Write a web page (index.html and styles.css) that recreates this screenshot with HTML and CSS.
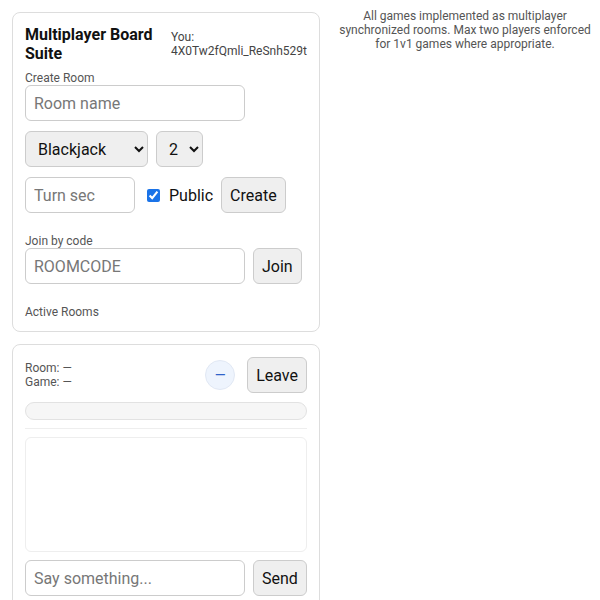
FILE: index.html
```html
<!DOCTYPE html>
<html>
<head>
<meta charset="utf-8">
<link rel="stylesheet" href="styles.css">
</head>
<body>
<div class="layout">
  <div class="side">
    <section class="card lobby">
      <div class="head">
        <h1 class="title">Multiplayer Board Suite</h1>
        <div class="you">You:<br>4X0Tw2fQmli_ReSnh529t</div>
      </div>
      <div class="lbl first">Create Room</div>
      <input class="field wide" type="text" placeholder="Room name">
      <div class="row">
        <select class="sel game"><option>Blackjack</option></select>
        <select class="sel count"><option>2</option></select>
      </div>
      <div class="row">
        <input class="field turn" type="text" placeholder="Turn sec">
        <label class="check"><input type="checkbox" checked> Public</label>
        <button class="btn">Create</button>
      </div>
      <div class="lbl gap">Join by code</div>
      <div class="row tight">
        <input class="field wide" type="text" placeholder="ROOMCODE">
        <button class="btn">Join</button>
      </div>
      <div class="lbl gap last">Active Rooms</div>
    </section>
    <section class="card room">
      <div class="roomhead">
        <div class="meta">Room: —<br>Game: —</div>
        <div class="acts">
          <span class="dot">—</span>
          <button class="btn">Leave</button>
        </div>
      </div>
      <div class="bar"></div>
      <div class="divider"></div>
      <div class="chatbox"></div>
      <div class="row chat">
        <input class="field wide" type="text" placeholder="Say something...">
        <button class="btn">Send</button>
      </div>
    </section>
  </div>
  <aside class="note">All games implemented as multiplayer synchronized rooms. Max two players enforced for 1v1 games where appropriate.</aside>
</div>
</body>
</html>
```

FILE: styles.css
```css
html, body {
  margin: 0;
  padding: 0;
  background: #fff;
}
body {
  font-family: Roboto, "Liberation Sans", sans-serif;
  color: #111;
  padding: 12px 2px 0 12px;
}
.layout {
  display: grid;
  grid-template-columns: 308px 1fr;
  column-gap: 12px;
  align-items: start;
}
.side {
  display: flex;
  flex-direction: column;
  gap: 12px;
}
.card {
  border: 1px solid #ddd;
  border-radius: 8px;
  padding: 12px;
  display: flex;
  flex-direction: column;
  background: #fff;
}
.head {
  display: flex;
  align-items: center;
  gap: 12px;
}
.title {
  margin: 0;
  flex: 1;
  font-size: 16px;
  line-height: 19px;
  font-weight: 700;
  color: #111;
}
.you {
  flex: none;
  font-size: 12px;
  line-height: 14px;
  color: #444;
}
.lbl {
  font-size: 12px;
  line-height: 14px;
  color: #555;
}
.lbl.first { margin-top: 8px; margin-bottom: 0; }
.lbl.gap { margin-top: 21px; }
.lbl.last { margin-top: 21px; }
.field {
  box-sizing: border-box;
  height: 36px;
  border: 1px solid #ccc;
  border-radius: 6px;
  padding: 0 8px;
  font-family: inherit;
  font-size: 16px;
  color: #111;
  background: #fff;
  outline: none;
}
.field::placeholder { color: #777; }
.wide { width: 220px; }
.turn { width: 110px; }
.row {
  display: flex;
  align-items: center;
  gap: 8px;
  margin-top: 10px;
}
.row.tight { margin-top: 0; }
.sel {
  box-sizing: border-box;
  height: 36px;
  border: 1px solid #ccc;
  border-radius: 6px;
  background-color: #efefef;
  font-family: inherit;
  font-size: 16px;
  color: #111;
  padding: 0 8px;
}
.game { width: 123px; padding-left: 8px; }
.count { width: 47px; }
.check {
  display: flex;
  align-items: center;
  gap: 9px;
  font-size: 16px;
  margin-left: 4px;
}
.check input {
  margin: 0;
  width: 13px;
  height: 13px;
  accent-color: #1a73e8;
}
.btn {
  box-sizing: border-box;
  height: 36px;
  border: 1px solid #ccc;
  border-radius: 6px;
  background: #efefef;
  font-family: inherit;
  font-size: 16px;
  color: #111;
  padding: 0 8px;
}
.roomhead {
  display: flex;
  align-items: center;
  justify-content: space-between;
}
.meta {
  font-size: 12px;
  line-height: 14px;
  color: #555;
}
.acts {
  display: flex;
  align-items: center;
  gap: 12px;
}
.dot {
  box-sizing: border-box;
  width: 30px;
  height: 30px;
  border-radius: 50%;
  background: #eef4fd;
  border: 1px solid #e1e8f4;
  color: #2f63c9;
  display: flex;
  align-items: center;
  justify-content: center;
  font-size: 14px;
}
.bar {
  box-sizing: border-box;
  margin-top: 9px;
  height: 18px;
  border-radius: 9px;
  background: #f6f6f6;
  border: 1px solid #e2e2e2;
}
.divider {
  margin-top: 8px;
  height: 1px;
  background: #eee;
}
.chatbox {
  box-sizing: border-box;
  margin-top: 8px;
  height: 115px;
  border: 1px solid #eee;
  border-radius: 6px;
}
.row.chat { margin-top: 8px; }
.note {
  margin-top: -3px;
  font-size: 12px;
  line-height: 14px;
  color: #555;
  text-align: center;
}
```
